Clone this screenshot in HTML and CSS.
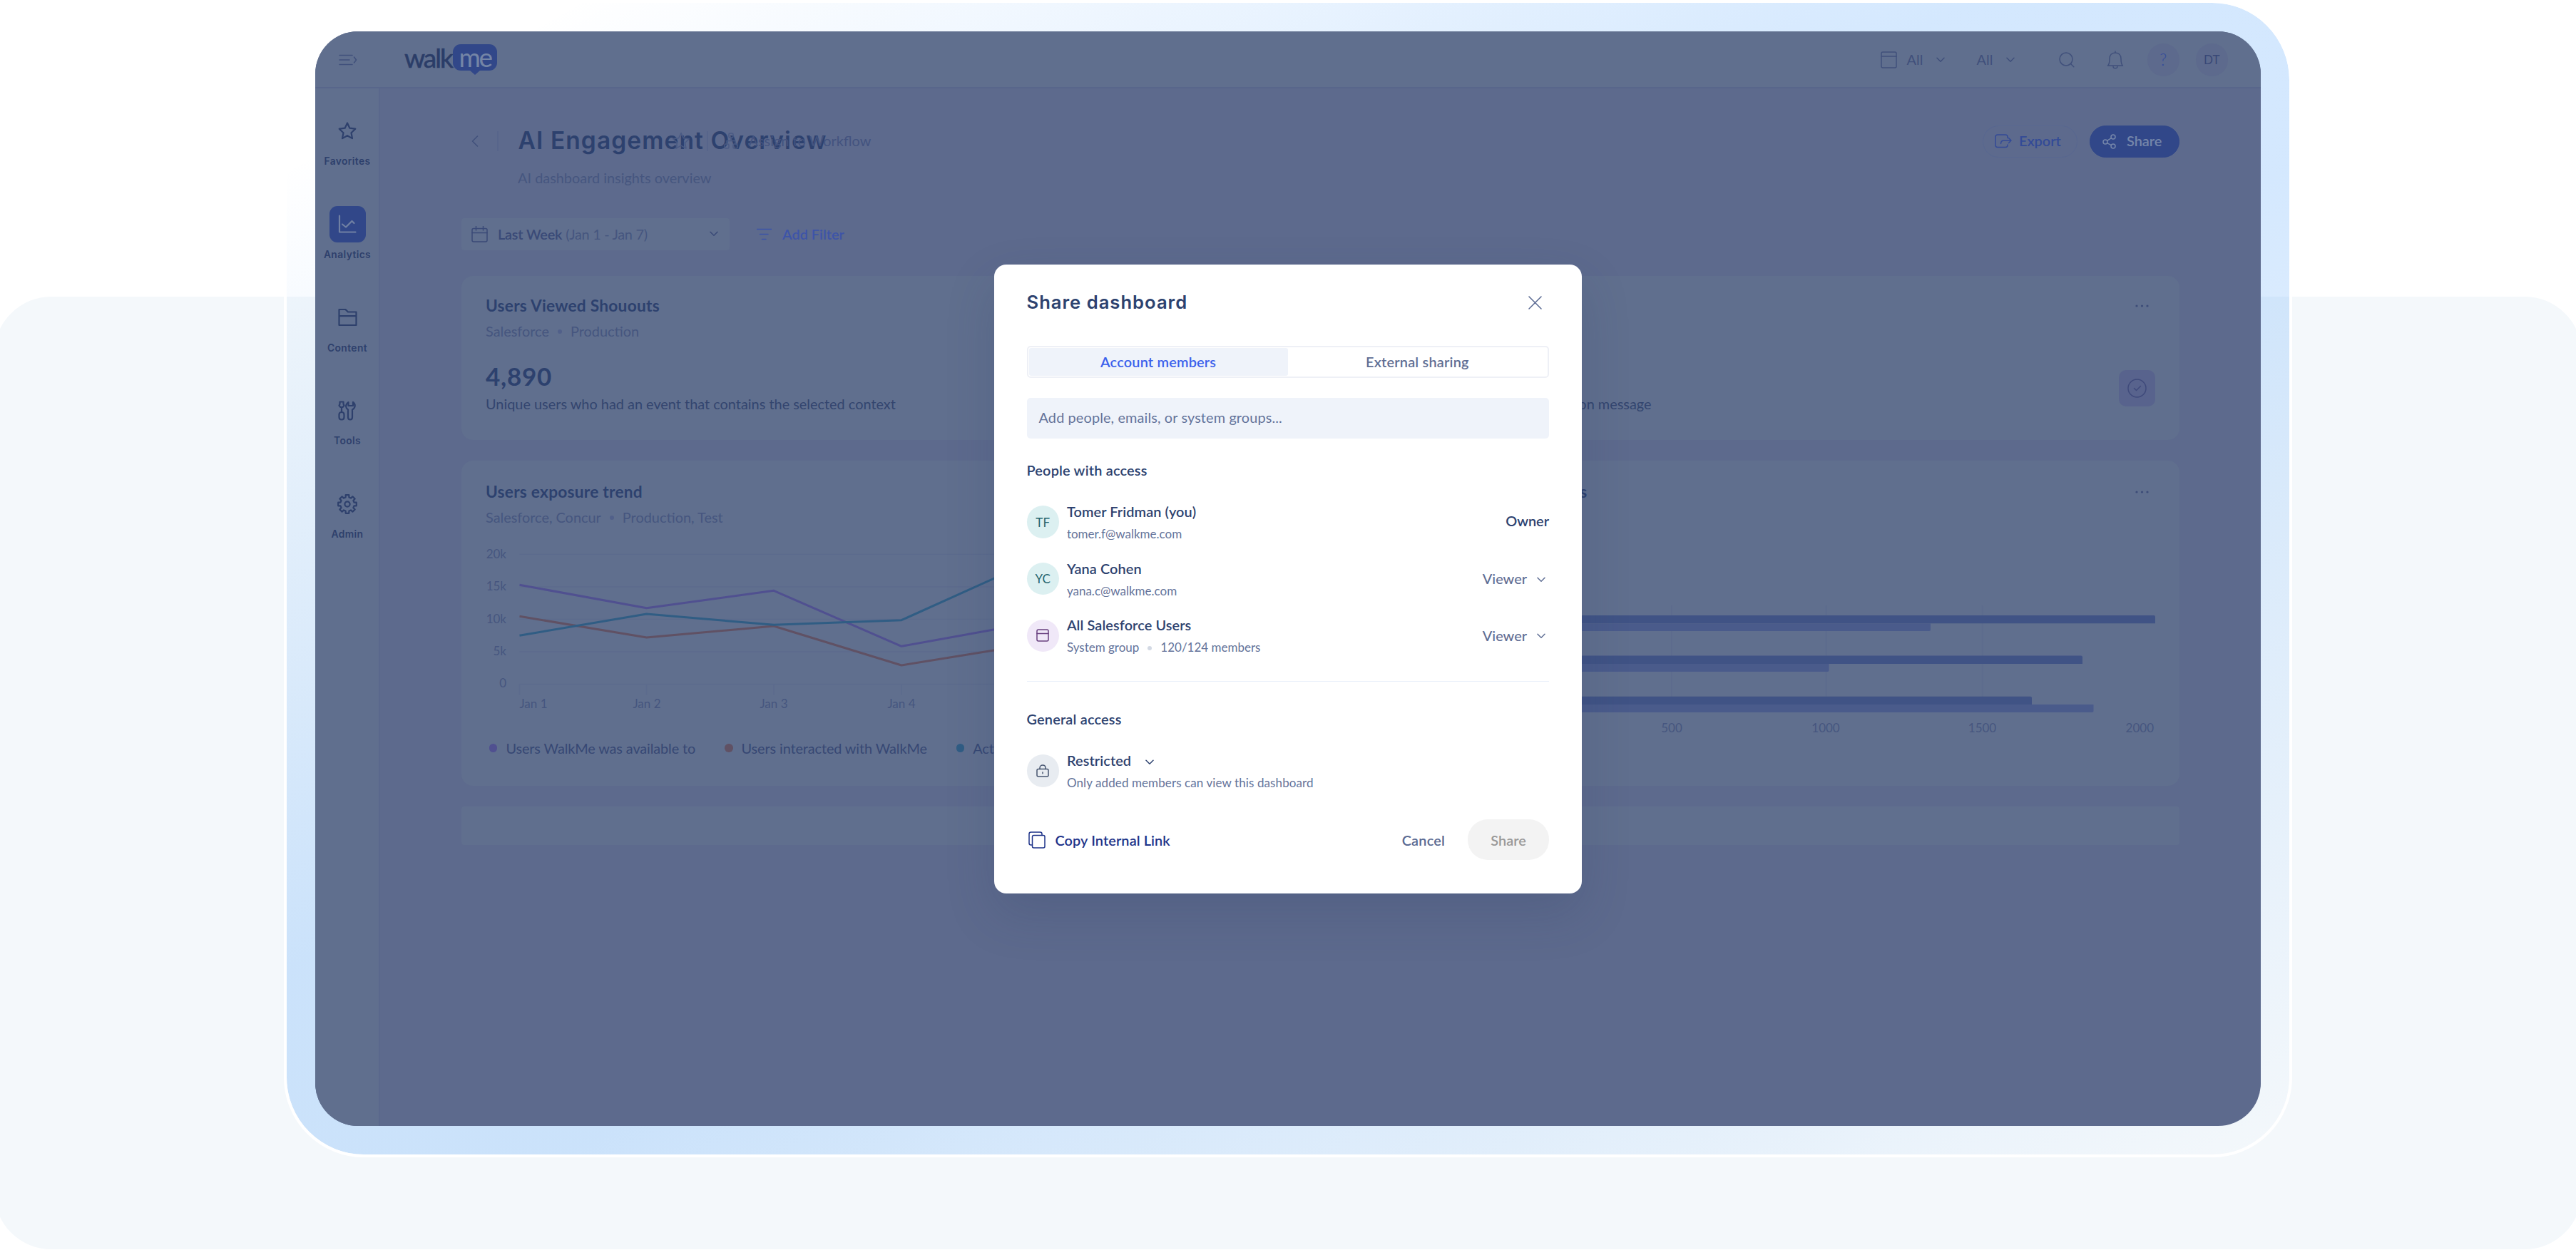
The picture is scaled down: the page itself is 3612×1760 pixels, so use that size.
FILE: index.html
```html
<!DOCTYPE html>
<html lang="en">
<head>
  <meta charset="UTF-8">
  <meta name="viewport" content="width=device-width, initial-scale=1.0">
  <title>Share dashboard</title>
  <link rel="stylesheet" href="styles.css">
</head>
<body>
  <div class="stage">
    <div class="backdrop"></div>

    <div class="frame">
      <div class="app">

        <header class="topbar">
          <svg class="icon menu-icon" width="26" height="16" viewBox="0 0 26 16"><path d="M1 1.5h18M1 8h14M1 14.5h18M21.5 4l3 4-3 4"/></svg>
          <div class="logo">
            <span class="logo-walk">walk</span><span class="logo-me">me</span>
          </div>

          <div class="topbar-right">
            <svg class="icon" width="23" height="24" viewBox="0 0 23 24"><rect x="1" y="1" width="21" height="22" rx="2"/><path d="M1 7h21"/></svg>
            <span class="picker picker-first">All</span>
            <svg class="icon" width="12" height="8" viewBox="0 0 12 8"><path d="M1 1.2l5 5 5-5"/></svg>
            <span class="picker picker-second">All</span>
            <svg class="icon" width="12" height="8" viewBox="0 0 12 8"><path d="M1 1.2l5 5 5-5"/></svg>
            <svg class="icon search-icon" width="22" height="22" viewBox="0 0 22 22"><circle cx="10" cy="10" r="9"/><path d="M16.3 16.3l4.5 4.5"/></svg>
            <svg class="icon bell-icon" width="24" height="26" viewBox="0 0 24 26"><path d="M12 1v2M1.5 21h21c-2-1.500-2.500-4-2.500-9.500C20 6.500 17 3 12 3S4 6.500 4 11.500c0 5.500-.5 8-2.500 9.500zM9 22.500c.3 3 5.700 3 6 0"/></svg>
            <span class="bubble bubble-help">?</span>
            <span class="bubble">DT</span>
          </div>
        </header>

        <div class="body">
          <nav class="sidebar">
            <a class="nav-item">
              <span class="nav-icon"><svg class="icon" width="26" height="26" viewBox="0 0 26 26"><path d="M13 1.500l3.400 7.200 7.900 1-5.800 5.500 1.500 7.900-7-3.900-7 3.900 1.500-7.900L1.700 9.700l7.900-1z"/></svg></span>
              <span class="nav-label">Favorites</span>
            </a>
            <a class="nav-item">
              <span class="nav-icon nav-icon-active"><svg class="icon" width="26" height="26" viewBox="0 0 26 26"><path d="M2 1.500V24.500H24.500M6 13.500l5 4L19.500 9l3 3"/></svg></span>
              <span class="nav-label">Analytics</span>
            </a>
            <a class="nav-item">
              <span class="nav-icon"><svg class="icon" width="27" height="26" viewBox="0 0 27 26"><path d="M1.500 24V2h9l3.500 3.500h11.500V24zM1.500 11.200h24"/></svg></span>
              <span class="nav-label">Content</span>
            </a>
            <a class="nav-item">
              <span class="nav-icon"><svg class="icon" width="26" height="28" viewBox="0 0 26 28"><path d="M2.500 1.500h5v3l1 2.200-2 2.300h-3l-2-2.300 1-2.200zM5 9v7M5 16c2.500 0 3.500 1.500 3.500 3.500v3.500c0 2.300-1 3.500-3.500 3.500s-3.500-1.200-3.500-3.500v-3.500C1.500 17.500 2.500 16 5 16zM14.500 2c-5 4-4 8-.5 10.500V23c0 2 .8 3.500 3 3.500s3-1.500 3-3.500V12.500C24.500 10 25 5 21 2v5h-6.500z"/></svg></span>
              <span class="nav-label">Tools</span>
            </a>
            <a class="nav-item">
              <span class="nav-icon"><svg class="icon" width="28" height="28" viewBox="0 0 28 28"><path d="M23.500 11.600L26.800 11.700V16.300L23.500 16.400L22.400 19L24.700 21.400L21.400 24.700L19 22.400L16.400 23.500L16.300 26.800H11.700L11.600 23.500L9 22.400L6.600 24.700L3.300 21.400L5.600 19L4.500 16.400L1.200 16.300V11.700L4.500 11.600L5.600 9L3.300 6.600L6.600 3.300L9 5.600L11.600 4.500L11.700 1.200H16.300L16.400 4.500L19 5.600L21.400 3.300L24.700 6.600L22.400 9z"/><circle cx="14" cy="14" r="3.600"/></svg></span>
              <span class="nav-label">Admin</span>
            </a>
          </nav>

          <main class="main">
            <div class="page-head">
              <svg class="icon back-icon" width="10" height="16" viewBox="0 0 10 16"><path d="M8.500 1L1.500 8l7 7"/></svg>
              <span class="rule"></span>
              <h1>AI Engagement Overview</h1>
              <div class="page-tools">
                <svg class="icon" width="26" height="26" viewBox="0 0 26 26"><path d="M13 1.500l3.400 7.200 7.900 1-5.800 5.500 1.500 7.900-7-3.900-7 3.900 1.500-7.900L1.700 9.700l7.900-1z"/></svg>
                <span class="rule"></span>
                <svg class="icon" width="20" height="24" viewBox="0 0 20 24"><rect x="7" y="1" width="6" height="6" rx="1.500"/><rect x="1" y="16" width="6" height="6" rx="1.500"/><rect x="13" y="16" width="6" height="6" rx="1.500"/><path d="M10 7v4.500M4 16v-4.500h12V16"/></svg>
                <span class="page-tools-label">Assign to Workflow</span>
              </div>
              <div class="page-actions">
                <button class="btn btn-outline">
                  <svg class="icon" width="24" height="20" viewBox="0 0 24 20"><path d="M18 5.500V4c0-2-1-3-3-3H4C2 1 1 2 1 4v11.500c0 2 1 3 3 3h11c2 0 3-1 3-3V15M8.500 13.500c0-3 1.500-4.500 4.500-4.500h10M19.500 5.500L23 9l-3.500 3.500"/></svg>
                  <span>Export</span>
                </button>
                <button class="btn btn-solid">
                  <svg class="icon" width="19" height="21" viewBox="0 0 19 21"><circle cx="4" cy="11" r="3"/><circle cx="15" cy="4" r="3"/><circle cx="15" cy="17" r="3"/><path d="M6.600 9.400L12.400 5.600M6.600 12.600l5.800 3"/></svg>
                  <span>Share</span>
                </button>
              </div>
            </div>
            <p class="page-desc">AI dashboard insights overview</p>

            <div class="filters">
              <div class="date-select">
                <svg class="icon" width="23" height="23" viewBox="0 0 23 23"><rect x="1" y="3.500" width="21" height="18.500" rx="2"/><path d="M1 9.500h21M6.500 0v6M16.500 0v6"/></svg>
                <span class="date-name">Last Week</span>
                <span class="date-range">(Jan 1 - Jan 7)</span>
                <svg class="icon date-chevron" width="12" height="8" viewBox="0 0 12 8"><path d="M1 1.2l5 5 5-5"/></svg>
              </div>
              <a class="add-filter">
                <svg class="icon" width="21" height="17" viewBox="0 0 21 17"><path d="M0 1.500h21M4.500 8.500h11.500M7.500 15.500h5.500"/></svg>
                Add Filter
              </a>
            </div>

            <div class="cards">
              <section class="card">
                <h2>Users Viewed Shououts</h2>
                <p class="card-sub">Salesforce <i class="dot"></i> Production</p>
                <p class="metric">4,890</p>
                <p class="metric-note">Unique users who had an event that contains the selected context</p>
              </section>

              <section class="card">
                <div class="card-head">
                  <svg class="more" width="19" height="4" viewBox="0 0 19 4"><circle cx="2" cy="2" r="1.600"/><circle cx="9.500" cy="2" r="1.600"/><circle cx="17" cy="2" r="1.600"/></svg>
                </div>
                <div class="metric-row">
                  <p class="metric-note note-end">on message</p>
                  <span class="check-tile"><svg class="icon" width="27" height="27" viewBox="0 0 27 27"><circle cx="13.500" cy="13.500" r="12.500"/><path d="M9.500 13.500l3 3 6-6"/></svg></span>
                </div>
              </section>

              <section class="card card-tall">
                <h2>Users exposure trend</h2>
                <p class="card-sub">Salesforce, Concur <i class="dot"></i> Production, Test</p>
                <svg class="chart" width="1120" height="240" viewBox="681 760 1120 240">
                  <path class="grid-line" d="M728.500 777.500H1801M728.500 823H1801M728.500 868.500H1801M728.500 914H1801M728.500 959.500H1801M728.500 959.500v15M906.500 959.500v15M1085 959.500v15M1264 959.500v15"/>
                  <g class="axis" text-anchor="end">
                    <text x="710" y="783">20k</text>
                    <text x="710" y="828">15k</text>
                    <text x="710" y="873.500">10k</text>
                    <text x="710" y="919">5k</text>
                    <text x="710" y="964">0</text>
                  </g>
                  <g class="axis" text-anchor="middle">
                    <text x="728.500" y="992.500" text-anchor="start">Jan 1</text>
                    <text x="907" y="992.500">Jan 2</text>
                    <text x="1085" y="992.500">Jan 3</text>
                    <text x="1264" y="992.500">Jan 4</text>
                  </g>
                  <path class="line line-purple" d="M728.500 820.300L906.600 852.700L1085 828.300L1264 906.300L1443 874"/>
                  <path class="line line-red" d="M728.500 864.300L906.600 894L1085 878L1264 933L1443 904"/>
                  <path class="line line-teal" d="M728.500 891.300L906.600 861L1085 876.300L1264 869.700L1443 789"/>
                </svg>
                <ul class="legend">
                  <li><i class="key key-purple"></i>Users WalkMe was available to</li>
                  <li><i class="key key-red"></i>Users interacted with WalkMe</li>
                  <li><i class="key key-teal"></i>Acti</li>
                </ul>
              </section>

              <section class="card card-tall">
                <div class="card-head">
                  <h2 class="title-end">s</h2>
                  <svg class="more" width="19" height="4" viewBox="0 0 19 4"><circle cx="2" cy="2" r="1.600"/><circle cx="9.500" cy="2" r="1.600"/><circle cx="17" cy="2" r="1.600"/></svg>
                </div>
                <svg class="bars" width="1122" height="190" viewBox="1900 845 1122 190">
                  <path class="grid-line" d="M2344 849V999M2560.500 849V999M2779.500 849V999"/>
                  <g class="bar-dark">
                    <path d="M2127 863H3020a2 2 0 0 1 2 2V874.300H2127z"/>
                    <path d="M2127 919.500H2918a2 2 0 0 1 2 2V931H2127z"/>
                    <path d="M2127 976.700H2847a2 2 0 0 1 2 2V988H2127z"/>
                  </g>
                  <g class="bar-light">
                    <path d="M2127 874.300H2707V883a2 2 0 0 1-2 2H2127z"/>
                    <path d="M2127 931H2564.500V940a2 2 0 0 1-2 2H2127z"/>
                    <path d="M2127 988H2935.500V997a2 2 0 0 1-2 2H2127z"/>
                  </g>
                  <g class="axis" text-anchor="middle">
                    <text x="2344" y="1027">500</text>
                    <text x="2560" y="1027">1000</text>
                    <text x="2779.500" y="1027">1500</text>
                    <text x="3020" y="1027" text-anchor="end">2000</text>
                  </g>
                </svg>
              </section>

              <section class="card card-strip"></section>
            </div>
          </main>
        </div>

        <div class="overlay">
          <div class="modal">
            <div class="modal-head">
              <h3>Share dashboard</h3>
              <svg class="icon close-icon" width="19" height="19" viewBox="0 0 19 19"><path d="M1 1l17 17M18 1L1 18"/></svg>
            </div>

            <div class="tabs">
              <span class="tab tab-active">Account members</span>
              <span class="tab">External sharing</span>
            </div>

            <div class="people-input">Add people, emails, or system groups...</div>

            <h4 class="people-title">People with access</h4>
            <div class="people">
              <div class="person">
                <span class="avatar">TF</span>
                <div class="person-text">
                  <p class="person-name">Tomer Fridman (you)</p>
                  <p class="person-sub">tomer.f@walkme.com</p>
                </div>
                <span class="owner">Owner</span>
              </div>
              <div class="person">
                <span class="avatar">YC</span>
                <div class="person-text">
                  <p class="person-name">Yana Cohen</p>
                  <p class="person-sub">yana.c@walkme.com</p>
                </div>
                <span class="role">Viewer <svg class="icon" width="12" height="8" viewBox="0 0 12 8"><path d="M1 1.200l5 5 5-5"/></svg></span>
              </div>
              <div class="person">
                <span class="avatar avatar-group"><svg class="icon" width="18" height="18" viewBox="0 0 18 18"><rect x="1" y="1" width="16" height="16" rx="2"/><path d="M1 6.500h16"/></svg></span>
                <div class="person-text">
                  <p class="person-name">All Salesforce Users</p>
                  <p class="person-sub">System group <i class="dot"></i> 120/124 members</p>
                </div>
                <span class="role">Viewer <svg class="icon" width="12" height="8" viewBox="0 0 12 8"><path d="M1 1.200l5 5 5-5"/></svg></span>
              </div>
            </div>

            <h4 class="general-title">General access</h4>
            <div class="person general">
              <span class="avatar avatar-lock"><svg class="icon" width="18" height="18" viewBox="0 0 18 18"><rect x="1" y="6.500" width="16" height="10.500" rx="2"/><path d="M5 6.500V5c0-5.300 8-5.300 8 0v1.500M9 11v1.800"/></svg></span>
              <div class="person-text">
                <p class="person-name">Restricted <svg class="icon restricted-chevron" width="12" height="8" viewBox="0 0 12 8"><path d="M1 1.200l5 5 5-5"/></svg></p>
                <p class="person-sub">Only added members can view this dashboard</p>
              </div>
            </div>

            <div class="modal-foot">
              <a class="copy-link">
                <svg class="icon" width="24" height="24" viewBox="0 0 24 24"><rect x="5.500" y="5.500" width="17.500" height="17.500" rx="2"/><path d="M5.500 19H3.500c-1.500 0-2.500-1-2.500-2.500v-13C1 2 2 1 3.500 1h13C18 1 19 2 19 3.500v2"/></svg>
                Copy Internal Link
              </a>
              <a class="cancel">Cancel</a>
              <button class="share">Share</button>
            </div>
          </div>
        </div>

      </div>
    </div>
  </div>
</body>
</html>
```

FILE: styles.css
```css
* {
  margin: 0;
  padding: 0;
  box-sizing: border-box;
}

body {
  font-family: Lato, "Open Sans", sans-serif;
  font-size: 19.9px;
  color: #2d426f;
  background-color: #fff;
}

.stage {
  position: relative;
  width: 3612px;
  height: 1760px;
  overflow: hidden;
}

.backdrop {
  position: absolute;
  left: -8px;
  top: 416px;
  width: 3628px;
  height: 1336px;
  border-radius: 80px;
  background-color: #f4f8fb;
}

.frame {
  position: relative;
  width: 2816px;
  height: 1623px;
  margin: 0 auto;
  padding: 40px;
  border: 4px solid #fff;
  border-radius: 112px;
  background: linear-gradient(to bottom right, rgba(16, 127, 249, 0) 7%, rgba(16, 127, 249, 0.18) 42%, rgba(16, 127, 249, 0.18) 57%, rgba(16, 127, 249, 0) 100%) padding-box;
}

.app {
  position: relative;
  display: flex;
  flex-direction: column;
  width: 2728px;
  height: 1535px;
  border-radius: 60px;
  overflow: hidden;
  background-color: #5d6a8d;
}

.icon {
  display: block;
  flex-shrink: 0;
  fill: none;
  stroke: currentColor;
  stroke-width: 1.5;
  stroke-linecap: round;
  stroke-linejoin: round;
}

/* top bar */
.topbar {
  display: flex;
  align-items: center;
  height: 80px;
  padding: 2px 46px 0 33px;
  border-bottom: 2px solid #58668b;
  background-color: #606f8e;
  color: #40507b;
}

.logo {
  display: flex;
  align-items: flex-start;
  height: 44px;
  margin-left: 66px;
  font-size: 37px;
  line-height: 38px;
}

.logo-walk {
  width: 68px;
  letter-spacing: -2px;
  color: #2b3d68;
  -webkit-text-stroke: 0.6px #2b3d68;
}

.logo-me {
  position: relative;
  width: 62px;
  height: 37px;
  border-radius: 11px;
  background-color: #314789;
  color: #7485a6;
  letter-spacing: -2.5px;
  line-height: 36px;
  text-align: center;
}

.logo-me::after {
  content: "";
  position: absolute;
  left: 23px;
  top: 36px;
  border: 8px solid transparent;
  border-top: 7px solid #314789;
  border-bottom: 0;
}

.topbar-right {
  display: flex;
  align-items: center;
  margin-left: auto;
}

.picker {
  width: 21px;
  margin: -2px 20px 0 0;
}

.picker-first {
  margin-left: 14px;
}

.picker-second {
  margin-left: 45px;
}

.search-icon {
  margin-left: 62px;
}

.bell-icon {
  margin-left: 45px;
  margin-right: 33px;
}

.bubble {
  width: 45.4px;
  height: 45.4px;
  border-radius: 50%;
  background-color: #5d6a8d;
  color: #394877;
  font-size: 17px;
  line-height: 45.4px;
  text-align: center;
}

.bubble-help {
  margin-right: 22.7px;
  color: #334b9c;
  font-size: 23px;
  font-weight: 300;
}

/* sidebar */
.body {
  display: flex;
  flex: 1;
}

.sidebar {
  width: 91px;
  padding: 34px 0 0 1px;
  border-right: 2px solid #5a688c;
  background-color: #606f8e;
}

.nav-item {
  display: flex;
  flex-direction: column;
  align-items: center;
  height: 130.8px;
  color: #2e406c;
}

.nav-icon {
  display: flex;
  align-items: center;
  justify-content: center;
  width: 51px;
  height: 51px;
  border-radius: 11px;
}

.nav-icon .icon {
  stroke-width: 2.2;
}

.nav-icon-active {
  background-color: #314789;
  color: #7080a3;
}

.nav-label {
  margin-top: 7px;
  font-family: Inter, sans-serif;
  font-size: 13.8px;
  font-weight: 600;
  letter-spacing: 0.4px;
  line-height: 20px;
}

/* page */
.main {
  flex: 1;
  padding: 51.500px 114px 0 114px;
}

.page-head {
  position: relative;
  display: flex;
  align-items: center;
  height: 45.7px;
  color: #40507b;
}

.back-icon {
  margin-left: 14px;
}

.rule {
  width: 1.5px;
  height: 28px;
  background-color: #57658b;
}

.back-icon + .rule {
  margin-left: 26px;
}

h1 {
  margin: 0 0 3px 28px;
  font-family: Inter, sans-serif;
  font-size: 33.5px;
  font-weight: 600;
  letter-spacing: 1.1px;
  line-height: 42px;
  white-space: nowrap;
  color: #2d416e;
}

.page-tools {
  position: absolute;
  left: 295px;
  top: 5px;
  display: flex;
  align-items: center;
  height: 34px;
  color: #4a5a83;
}

.page-tools .rule {
  margin: 0 22px 0 23px;
}

.page-tools-label {
  margin: -2px 0 0 15px;
  color: #43537f;
}

.page-actions {
  display: flex;
  gap: 17px;
  margin-left: auto;
}

.btn {
  display: flex;
  align-items: center;
  height: 45.7px;
  padding: 0 16px;
  border: 1.5px solid #586790;
  border-radius: 23px;
  background: none;
  font-family: inherit;
  font-size: 19.9px;
  font-weight: 600;
  color: #334a97;
}

.btn span {
  margin-top: -2px;
}

.btn-outline {
  gap: 10px;
  width: 133px;
}

.btn-solid {
  gap: 15px;
  width: 126px;
  padding-left: 17px;
  border-color: #314789;
  background-color: #314789;
  color: #7586aa;
}

.page-desc {
  margin: 13.500px 0 0 79px;
  line-height: 28px;
  color: #46567f;
}

.filters {
  display: flex;
  align-items: center;
  height: 45.4px;
  margin-top: 43px;
}

.date-select {
  display: flex;
  align-items: center;
  width: 376px;
  height: 45.4px;
  padding: 0 16px 0 14px;
  border-radius: 4px;
  background-color: #606f8e;
  color: #3a4a77;
}

.date-name {
  margin-left: 14px;
  font-weight: 600;
  letter-spacing: -0.2px;
}

.date-range {
  margin-left: 5px;
  letter-spacing: -0.3px;
  color: #46567f;
}

.date-chevron {
  margin-left: auto;
}

.add-filter {
  display: flex;
  align-items: center;
  gap: 15px;
  margin-left: 38px;
  font-weight: 600;
  color: #3d54a8;
}

.cards {
  display: grid;
  grid-template-columns: 1fr 1fr;
  gap: 29px 28px;
  margin-top: 36px;
}

.card {
  height: 230px;
  padding: 26px 34px 0 34px;
  border-radius: 16px;
  background-color: #606f8e;
}

.card-tall {
  height: 456px;
  padding-top: 28px;
}

.card-strip {
  grid-column: 1 / 3;
  height: 54px;
  border-radius: 4px;
}

.card-head {
  display: flex;
  align-items: center;
  height: 32px;
}

h2 {
  font-size: 22.7px;
  font-weight: 700;
  letter-spacing: 0.25px;
  line-height: 32px;
  color: #2d416e;
}

.title-end {
  width: 326px;
  text-align: right;
}

.more {
  margin: 0 9px 0 auto;
  fill: #3c4c78;
}

.card-sub {
  display: flex;
  align-items: center;
  margin-top: 3px;
  line-height: 32px;
  color: #46567f;
}

.dot {
  width: 6px;
  height: 6px;
  margin: 2px 12px 0;
  border-radius: 50%;
  background-color: #51608a;
}

.metric {
  margin-top: 26px;
  font-size: 35px;
  font-weight: 700;
  letter-spacing: 0.7px;
  line-height: 42px;
  color: #2d416e;
}

.metric-note {
  margin-top: 4px;
  line-height: 28px;
  color: #33456f;
}

.metric-row {
  display: flex;
  justify-content: space-between;
  margin-top: 74px;
}

.note-end {
  width: 416px;
  margin-top: 33px;
  text-align: right;
}

.check-tile {
  display: flex;
  align-items: center;
  justify-content: center;
  width: 51px;
  height: 51px;
  border-radius: 10px;
  background-color: #58638d;
  color: #3f4a7b;
}

.chart {
  display: block;
  margin-top: 19px;
}

.bars {
  display: block;
  margin-top: 139px;
}

.grid-line {
  fill: none;
  stroke: #5c6b8d;
  stroke-width: 1.4;
}

.axis {
  font-size: 17px;
  fill: #46567f;
}

.line {
  fill: none;
  stroke-width: 3;
  stroke-linejoin: round;
}

.line-purple {
  stroke: #505090;
}

.line-red {
  stroke: #605164;
}

.line-teal {
  stroke: #305d84;
}

.bar-dark {
  fill: #405385;
}

.bar-light {
  fill: #4a5b8b;
}

.legend {
  display: flex;
  gap: 41px;
  margin-top: 33px;
  padding-left: 5px;
  list-style: none;
  letter-spacing: -0.12px;
  line-height: 32px;
  color: #374874;
}

.legend li {
  display: flex;
  align-items: center;
}

.key {
  width: 11.400px;
  height: 11.400px;
  margin-right: 12px;
  border-radius: 50%;
}

.key-purple {
  background-color: #505090;
}

.key-red {
  background-color: #605164;
}

.key-teal {
  background-color: #305d84;
}

/* share modal */
.overlay {
  position: absolute;
  inset: 0;
  display: flex;
  align-items: center;
  justify-content: center;
}

.modal {
  width: 824px;
  height: 882px;
  padding: 33px 46px 0 45.500px;
  border-radius: 17px;
  background-color: #fff;
  box-shadow: 0 28px 68px rgba(40, 55, 95, 0.18);
}

.modal-head {
  display: flex;
  align-items: center;
  justify-content: space-between;
  height: 40px;
}

h3 {
  font-family: Inter, sans-serif;
  font-size: 25.6px;
  font-weight: 600;
  letter-spacing: 1px;
}

.close-icon {
  margin: 2px 10px 0 0;
  color: #566690;
}

.tabs {
  display: flex;
  height: 45.400px;
  margin-top: 41px;
  padding: 1px;
  border: 2px solid #eef0f6;
  border-radius: 5px;
}

.tab {
  flex: 1;
  border-radius: 3px;
  font-weight: 600;
  letter-spacing: 0.2px;
  line-height: 39px;
  text-align: center;
  color: #5f6e94;
}

.tab-active {
  background-color: #eff3fa;
  color: #3b61ec;
}

.people-input {
  height: 57px;
  margin-top: 28.500px;
  padding-left: 17px;
  border-radius: 5px;
  background-color: #eff3fa;
  letter-spacing: 0.12px;
  line-height: 55px;
  color: #64739a;
}

h4 {
  font-size: 19.9px;
  font-weight: 600;
  letter-spacing: 0.2px;
  line-height: 28px;
}

.people-title {
  margin-top: 30px;
}

.people {
  display: flex;
  flex-direction: column;
  gap: 22.200px;
  margin-top: 30px;
  padding-bottom: 35px;
  border-bottom: 1.500px solid #e9effa;
}

.person {
  display: flex;
  align-items: center;
  height: 57.400px;
}

.avatar {
  display: flex;
  align-items: center;
  justify-content: center;
  width: 45.400px;
  height: 45.400px;
  border-radius: 50%;
  background-color: #dcf0f1;
  font-size: 17px;
  color: #24646d;
}

.avatar .icon {
  stroke-width: 1.500;
}

.avatar-group {
  background-color: #f0e8f8;
  color: #68407f;
}

.avatar-lock {
  background-color: #e8ecf1;
  color: #46546f;
}

.person-text {
  margin-left: 11px;
}

.person-name {
  display: flex;
  align-items: center;
  font-weight: 600;
  letter-spacing: 0.1px;
  line-height: 28px;
}

.person-sub {
  display: flex;
  align-items: center;
  margin-top: 6px;
  font-size: 17px;
  line-height: 24px;
  color: #64739a;
}

.person-sub .dot {
  background-color: #d3d9e4;
}

.owner {
  margin: 0 0 5px auto;
  font-weight: 600;
}

.role {
  display: flex;
  align-items: center;
  gap: 14px;
  margin: 0 5px 1px auto;
  font-weight: 500;
  color: #5f6e94;
}

.role .icon {
  margin-top: 3px;
}

.restricted-chevron {
  margin: 6px 0 0 20px;
}

.general-title {
  margin-top: 38px;
}

.general {
  margin-top: 30.500px;
}

.general .person-sub {
  letter-spacing: 0.1px;
}

.modal-foot {
  display: flex;
  align-items: center;
  height: 57px;
  margin-top: 39.500px;
}

.copy-link {
  display: flex;
  align-items: center;
  gap: 14px;
  margin-left: 2px;
  font-weight: 600;
  letter-spacing: 0.1px;
  color: #1e3389;
}

.cancel {
  margin: 0 32px 0 auto;
  font-weight: 600;
  letter-spacing: 0.2px;
  color: #5a6a92;
}

.share {
  width: 114px;
  height: 57px;
  border: none;
  border-radius: 28px;
  background-color: #f3f3f3;
  font-family: inherit;
  font-size: 19.9px;
  font-weight: 600;
  color: #999;
}
```
